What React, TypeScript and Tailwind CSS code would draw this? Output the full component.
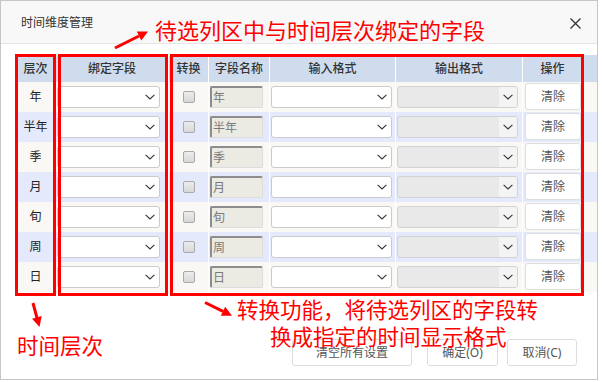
const LEVELS = ['年', '半年', '季', '月', '旬', '周', '日'];

const FONT = "font-['Noto_Sans','Noto_Sans_CJK_SC',sans-serif]";

function Chevron() {
  return (
    <svg width="10" height="6" viewBox="0 0 10 6">
      <path d="M0.6 0.8L5 5L9.4 0.8" fill="none" stroke="#333" strokeWidth="1.1" />
    </svg>
  );
}

function Select({ width, disabled }: { width: string; disabled?: boolean }) {
  if (disabled) {
    return (
      <div className={`${width} h-[22px] rounded-[3px] border border-[#d2d2d2] bg-[#e9e9e9] flex items-center justify-end overflow-hidden`}>
        <div className="w-[18px] h-full bg-[#f4f4f4] flex items-center justify-center">
          <Chevron />
        </div>
      </div>
    );
  }
  return (
    <div className={`${width} h-[22px] rounded-[3px] border border-[#cbcbcb] bg-white flex items-center justify-end pr-[4px]`}>
      <Chevron />
    </div>
  );
}

function Row({ label, idx }: { label: string; idx: number }) {
  const bg = idx % 2 === 0 ? 'bg-[#f9f8f4]' : 'bg-[#e4eafb]';
  return (
    <div className={`flex h-[30px] ${bg} text-[12px] text-[#222]`}>
      <div className="w-[40px] border-r border-white flex items-center justify-center">{label}</div>
      <div className="w-[113px] border-r border-white flex items-center pl-[1px]">
        <Select width="w-[103px]" />
      </div>
      <div className="w-[40px] border-r border-white flex items-center justify-center">
        <div className="w-[12px] h-[12px] rounded-[2px] border border-[#a9a9a9] bg-gradient-to-b from-[#ececec] to-[#d8d8d8]" />
      </div>
      <div className="w-[61px] border-r border-white flex items-center pl-[1px]">
        <div className="w-[53px] h-[22px] rounded-[2px] bg-[#ebebe4] border-t-2 border-l-2 border-[#8d8d8d] border-r border-b border-r-[#dcdcdc] border-b-[#dcdcdc] pl-[1px] flex items-center text-[#7a7a7a]">
          {label}
        </div>
      </div>
      <div className="w-[126px] border-r border-white flex items-center pl-[1px]">
        <Select width="w-[121px]" />
      </div>
      <div className="w-[127px] border-r border-white flex items-center pl-[1px]">
        <Select width="w-[121px]" disabled />
      </div>
      <div className="w-[59px] flex items-start pl-[2px] pt-[1px]">
        <button className="w-[56px] h-[27px] rounded-[3px] border border-[#dddddd] bg-white text-[#555] text-[12px]">清除</button>
      </div>
    </div>
  );
}

export default function App() {
  const headers: [string, string][] = [
    ['层次', 'w-[40px]'], ['绑定字段', 'w-[113px]'], ['转换', 'w-[40px]'], ['字段名称', 'w-[61px]'],
    ['输入格式', 'w-[126px]'], ['输出格式', 'w-[127px]'], ['操作', 'w-[59px]'],
  ];

  return (
    <div className={`relative w-[602px] h-[382px] bg-white ${FONT}`}>
      <div className="w-[598px] h-[380px] border border-[#c6c6c6] flex flex-col bg-white">
        <div className="h-[43px] shrink-0 bg-[#f8f8f8] border-b border-[#e6e6e6] flex items-center justify-between pl-[20px] pr-[16px] pt-[1px]">
          <span className="text-[12px] text-[#333]">时间维度管理</span>
          <svg width="11" height="11" viewBox="0 0 11 11" className="mt-[1px]">
            <path d="M0.5 0.5L10.5 10.5M10.5 0.5L0.5 10.5" stroke="#333" strokeWidth="1.3" />
          </svg>
        </div>

        <div className="pl-[15px] pt-[11px]">
          <div className="flex h-[27px] bg-[#cfdcee] text-[12px] text-[#333] font-medium">
            {headers.map(([h, w], i) => (
              <div key={h} className={`${w} flex items-center justify-center ${i < 6 ? 'border-r border-white' : ''}`}>{h}</div>
            ))}
          </div>
          {LEVELS.map((l, i) => <Row key={l} label={l} idx={i} />)}
        </div>

        <div className="mt-auto mb-[13px] flex justify-end pr-[20px] text-[12px] text-[#555]">
          <button className="w-[120px] h-[27px] rounded-[3px] border border-[#dddddd] bg-white">清空所有设置</button>
          <button className="w-[71px] h-[27px] rounded-[3px] border border-[#dddddd] bg-white ml-[15px]">确定(O)</button>
          <button className="w-[70px] h-[27px] rounded-[3px] border border-[#dddddd] bg-white ml-[9px]">取消(C)</button>
        </div>
      </div>

      {/* red annotation boxes */}
      <div className="absolute left-[15px] top-[54px] w-[41px] h-[242px] border-[3px] border-[#ff0000] pointer-events-none" />
      <div className="absolute left-[58px] top-[54px] w-[110px] h-[242px] border-[3px] border-[#ff0000] pointer-events-none" />
      <div className="absolute left-[170px] top-[54px] w-[414px] h-[242px] border-[3px] border-[#ff0000] pointer-events-none" />

      <svg className="absolute inset-0 pointer-events-none" width="602" height="382">
        <line x1="115" y1="48" x2="139" y2="36" stroke="#ff0000" strokeWidth="3" />
        <polygon points="148,31.5 141.3,40.4 136.8,31.5" fill="#ff0000" />
        <line x1="33" y1="303" x2="37" y2="318" stroke="#ff0000" strokeWidth="3" />
        <polygon points="39.5,327 41.7,316.1 32.1,318.7" fill="#ff0000" />
        <line x1="205" y1="302.5" x2="223" y2="311.3" stroke="#ff0000" strokeWidth="3" />
        <polygon points="232,315.7 220.8,315.8 225.2,306.8" fill="#ff0000" />
      </svg>

      <div className="absolute left-[155px] top-[19px] text-[22px] leading-[22px] text-[#ff0000] whitespace-nowrap">待选列区中与时间层次绑定的字段</div>
      <div className="absolute left-[17px] top-[335px] text-[21.5px] leading-[22px] text-[#ff0000] whitespace-nowrap">时间层次</div>
      <div className="absolute left-[237px] top-[299px] text-[21.5px] leading-[22px] text-[#ff0000] whitespace-nowrap">转换功能，将待选列区的字段转</div>
      <div className="absolute left-[270px] top-[326px] text-[21.5px] leading-[22px] text-[#ff0000] whitespace-nowrap">换成指定的时间显示格式</div>
    </div>
  );
}
